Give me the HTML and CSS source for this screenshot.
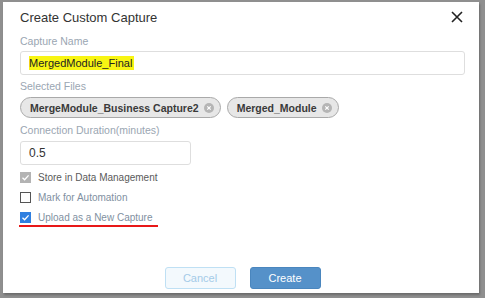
FILE: index.html
```html
<!DOCTYPE html>
<html>
<head>
<meta charset="utf-8">
<link rel="stylesheet" href="styles.css">
</head>
<body>
<div class="backdrop">
  <div class="modal">
    <div class="header">
      <div class="title">Create Custom Capture</div>
      <svg class="close" width="12" height="12" viewBox="0 0 12 12"><path d="M1 1L11 11M11 1L1 11" stroke="#222" stroke-width="1.6"/></svg>
    </div>
    <div class="label">Capture Name</div>
    <div class="input wide"><span class="hl">MergedModule_Final</span></div>
    <div class="label">Selected Files</div>
    <div class="chips">
      <span class="chip">MergeModule_Business Capture2 <span class="x"><svg width="10" height="10" viewBox="0 0 10 10"><circle cx="5" cy="5" r="5" fill="#b5b5b5"/><path d="M3.3 3.3L6.7 6.7M6.7 3.3L3.3 6.7" stroke="#fff" stroke-width="1.2"/></svg></span></span>
      <span class="chip">Merged_Module <span class="x"><svg width="10" height="10" viewBox="0 0 10 10"><circle cx="5" cy="5" r="5" fill="#b5b5b5"/><path d="M3.3 3.3L6.7 6.7M6.7 3.3L3.3 6.7" stroke="#fff" stroke-width="1.2"/></svg></span></span>
    </div>
    <div class="label">Connection Duration(minutes)</div>
    <div class="input short">0.5</div>
    <div class="checks">
      <div class="check disabled"><span class="box gray"><svg width="11" height="11" viewBox="0 0 11 11"><path d="M2.5 5.8L4.6 7.8L8.6 3.4" stroke="#fff" stroke-width="1.3" fill="none"/></svg></span><span class="ctext dark">Store in Data Management</span></div>
      <div class="check"><span class="box empty"></span><span class="ctext">Mark for Automation</span></div>
      <div class="check marked"><span class="box blue"><svg width="11" height="11" viewBox="0 0 11 11"><path d="M2.5 5.8L4.6 7.8L8.6 3.4" stroke="#fff" stroke-width="1.3" fill="none"/></svg></span><span class="ctext">Upload as a New Capture</span></div>
    </div>
    <div class="footer">
      <button class="btn cancel">Cancel</button>
      <button class="btn create">Create</button>
    </div>
  </div>
</div>
</body>
</html>
```
FILE: styles.css
```css
* { box-sizing: border-box; }
html, body { margin: 0; padding: 0; }
body {
  width: 485px;
  height: 298px;
  background: #8f8f8f;
  font-family: "Liberation Sans", Arial, sans-serif;
  overflow: hidden;
}
.backdrop {
  padding: 2px 6px 0 3px;
}
.modal {
  background: #fff;
  width: 476px;
  height: 291px;
  padding: 0 14px 0 17px;
  box-shadow: 1px 2px 2px rgba(0,0,0,0.25);
  display: flex;
  flex-direction: column;
}
.header {
  display: flex;
  justify-content: space-between;
  align-items: center;
  height: 28px;
  padding-top: 2px;
}
.title {
  font-size: 13px;
  color: #333;
}
.close { margin-right: 2px; }
.label {
  font-size: 10.5px;
  color: #9aa6b2;
  margin-top: 4px;
  height: 15px;
  line-height: 15px;
}
.input {
  border: 1px solid #dedede;
  border-radius: 3px;
  height: 24px;
  display: flex;
  align-items: center;
  padding-left: 8px;
  font-size: 11px;
  color: #222;
  margin-top: 2px;
}
.wide { width: 445px; }
.short { width: 171px; font-size: 12px; color: #333; margin-top: 3px; }
.hl {
  background: #f8f513;
  padding: 1px 2px 1px 0;
}
.chips {
  display: flex;
  gap: 6px;
  margin-top: 3px;
  margin-bottom: 1px;
}
.chip {
  display: inline-flex;
  align-items: center;
  gap: 5px;
  height: 21px;
  border: 1px solid #a9a9a9;
  background: #e7e7e7;
  border-radius: 11px;
  padding: 0 6px 0 9px;
  font-size: 10.5px;
  font-weight: bold;
  color: #3a3a3a;
}
.chip .x { display: inline-flex; }
.checks {
  margin-top: 7px;
  display: flex;
  flex-direction: column;
  gap: 9px;
}
.check {
  display: flex;
  align-items: center;
  gap: 7px;
  height: 11px;
  font-size: 10px;
  color: #7f90a1;
}
.box {
  width: 11px;
  height: 11px;
  display: inline-flex;
  flex: none;
}
.box.gray { background: #b3b3b3; }
.box.empty { border: 1.5px solid #555; }
.box.blue { background: #2f7fe0; }
.ctext.dark { color: #5a5a5a; }
.marked {
  width: 139px;
  margin-left: -1px;
  padding-left: 1px;
  position: relative;
}
.marked::after {
  content: "";
  position: absolute;
  left: 0;
  right: 0;
  bottom: -4px;
  height: 2px;
  background: #e81818;
}
.footer {
  margin-top: auto;
  margin-bottom: 4px;
  display: flex;
  justify-content: center;
  gap: 14px;
}
.btn {
  width: 71px;
  height: 22px;
  border-radius: 3px;
  font-family: "Liberation Sans", Arial, sans-serif;
  font-size: 11px;
}
.cancel {
  background: #f3f9fd;
  border: 1px solid #bfe0f4;
  color: #a4cbe8;
}
.create {
  background: #5591c9;
  border: 1px solid #4a86be;
  color: #fff;
}
```
